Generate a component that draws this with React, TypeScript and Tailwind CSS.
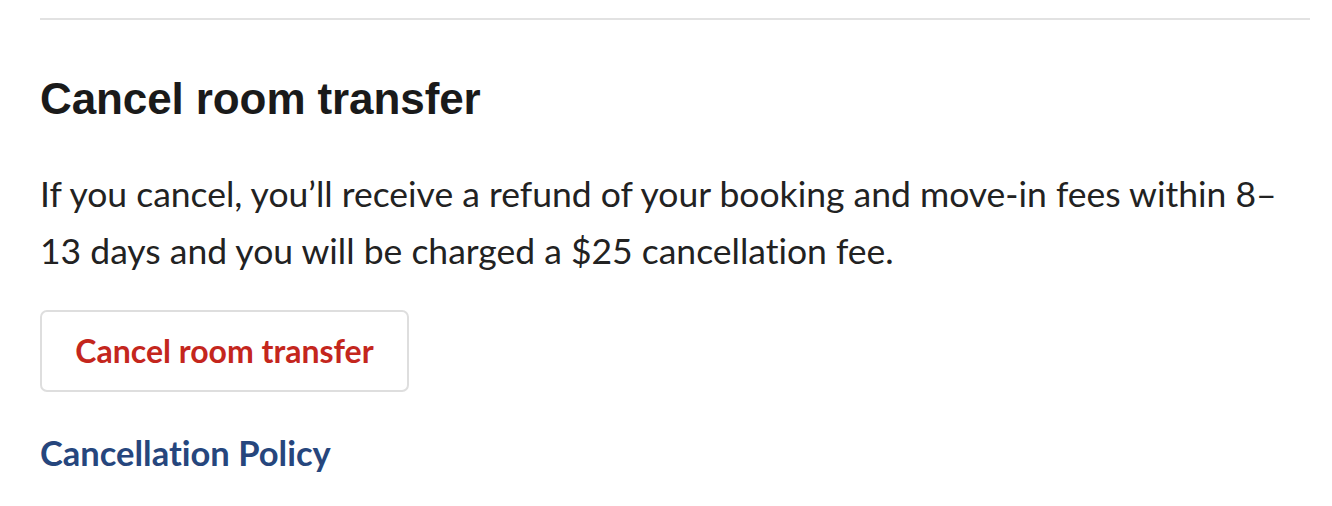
import React from "react";

export default function App() {
  return (
    <div className="w-[1332px] h-[506px] bg-white pl-[40px] pr-[22px] pt-[18px] [font-variant-ligatures:none]" style={{ fontFamily: "Lato, 'Noto Sans', sans-serif" }}>
      <div className="h-[2px] bg-[#e2e2e2]" />
      <h2 className="mt-[51px] text-[44px] leading-[56px] font-bold text-[#1a1a1a] tracking-[-0.1px]" style={{ fontFamily: "'Liberation Sans', Arial, sans-serif" }}>
        Cancel room transfer
      </h2>
      <p className="mt-[38px] text-[35.5px] leading-[57px] text-[#222222] w-[1250px]">
        If you cancel, you’ll receive a refund of your booking and move-in fees within 8–13 days and you will be charged a $25 cancellation fee.
      </p>
      <button className="mt-[31px] h-[82px] w-[369px] rounded-[7px] border-2 border-[#dedede] bg-white text-[32px] font-bold text-[#c4261d] flex items-center justify-center">
        Cancel room transfer
      </button>
      <a className="mt-[41px] block text-[34.5px] font-bold text-[#26467d] leading-[40px]">
        Cancellation Policy
      </a>
    </div>
  );
}
